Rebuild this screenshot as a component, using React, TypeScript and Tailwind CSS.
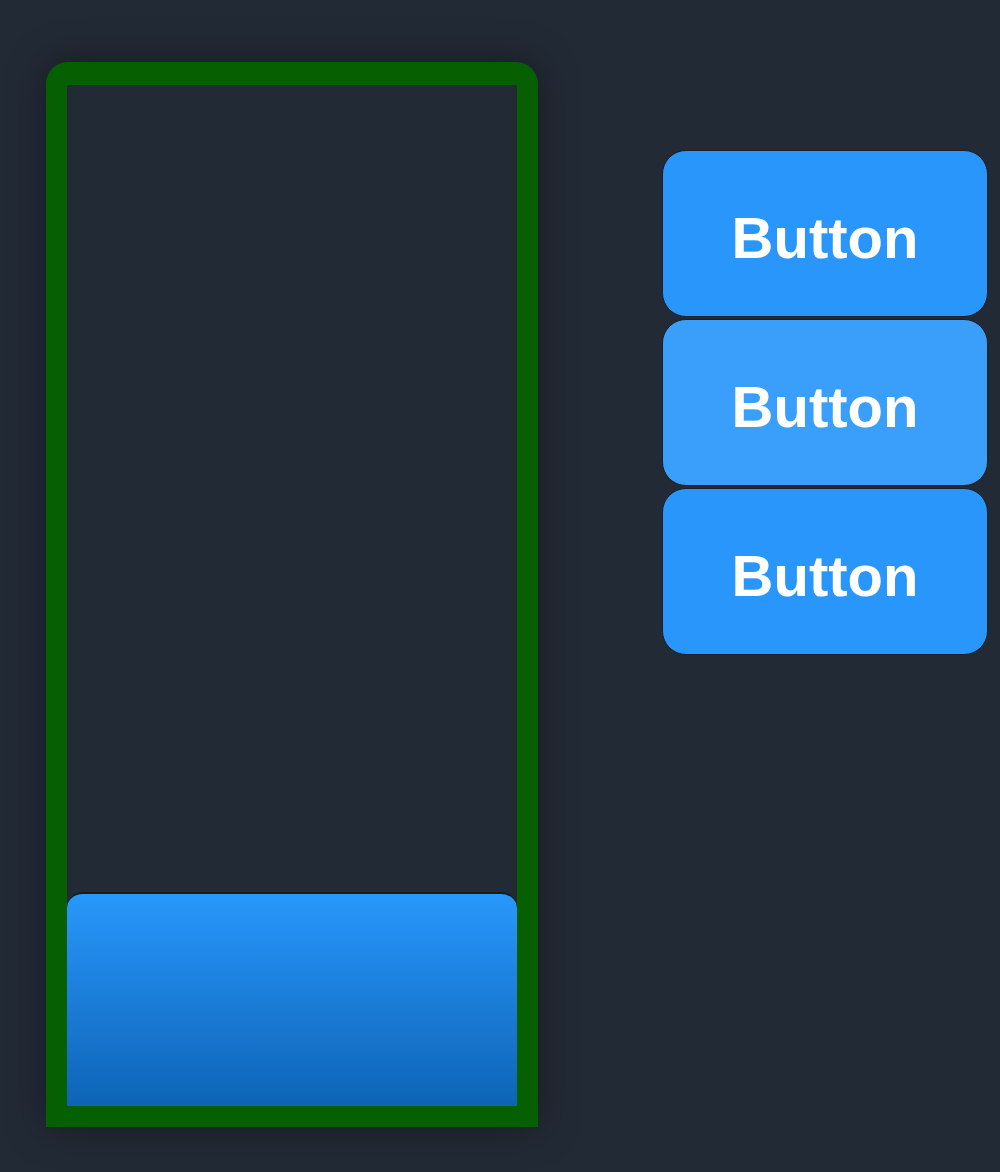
import React from "react";

export default function App() {
    const buttons = [
        { label: "Button", hover: false },
        { label: "Button", hover: true },
        { label: "Button", hover: false },
    ];

    return (
        <div className="min-h-[1172px] w-full bg-[#222a35] flex items-start pl-[46px] pt-[62px] font-['Liberation_Sans',Arial,sans-serif]">
            {/* Container box */}
            <div className="w-[492px] h-[1065px] border-[21px] border-t-[23px] border-[#065f00] rounded-t-[22px] flex flex-col justify-end shadow-[0_0_40px_rgba(0,0,0,0.35)]">
                <div className="h-[214px] w-full rounded-t-[16px] border-t-2 border-[#1c1a12] bg-gradient-to-b from-[#2898fc] to-[#0d64b6]" />
            </div>

            {/* Button stack */}
            <div className="ml-[124px] mt-[88px] flex flex-col gap-[2px]">
                {buttons.map((b, i) => (
                    <button
                        key={i}
                        className={`w-[326px] h-[167px] rounded-[24px] border border-[#1a1f26] text-white font-bold text-[58px] leading-none flex items-center justify-center pt-[8px] ${
                            b.hover ? "bg-[#3a9ffb]" : "bg-[#2896fa]"
                        }`}
                    >
                        {b.label}
                    </button>
                ))}
            </div>
        </div>
    );
}
